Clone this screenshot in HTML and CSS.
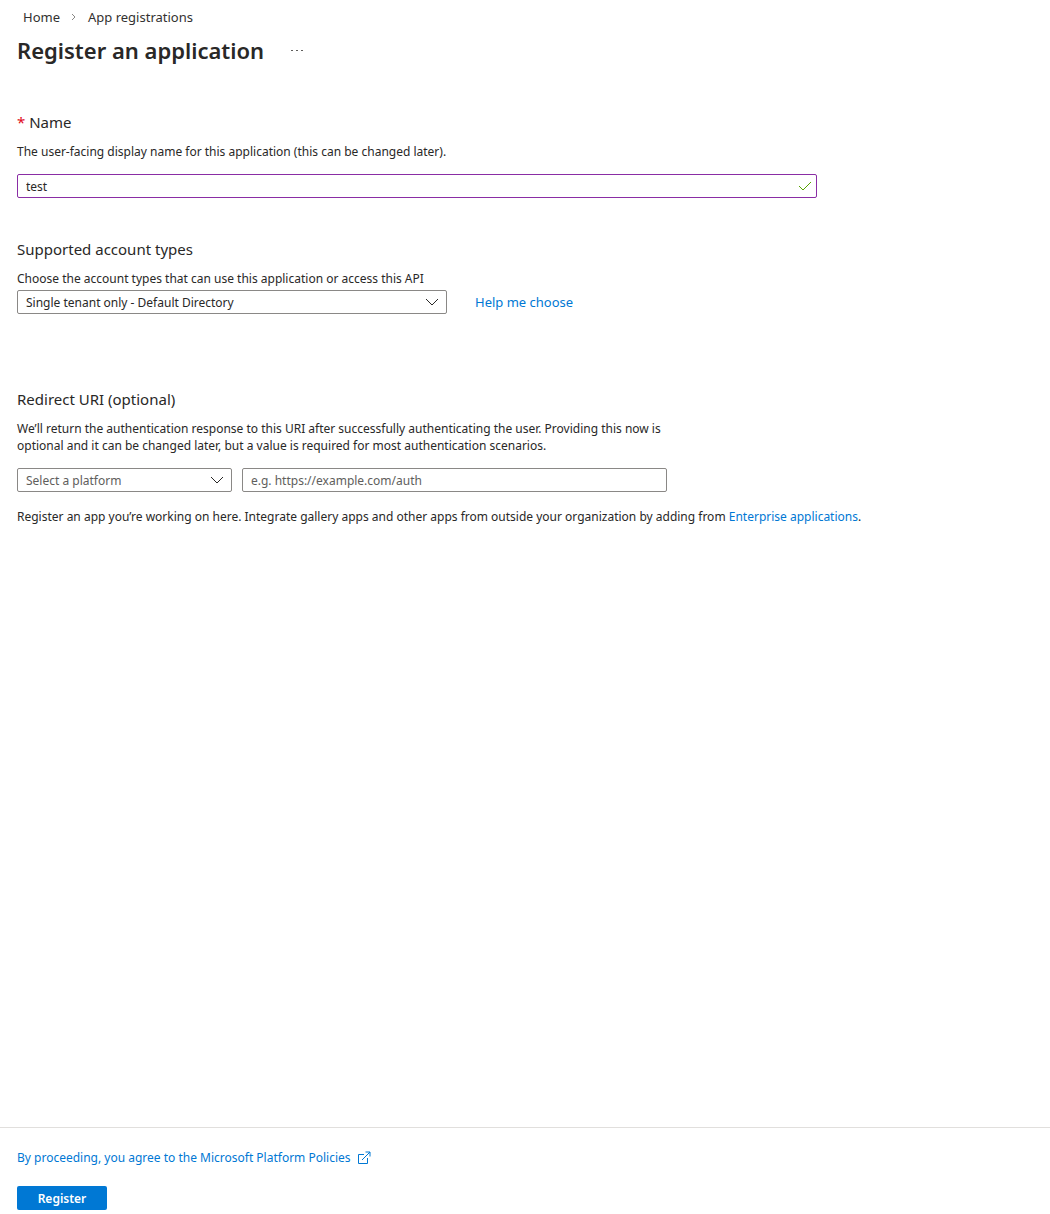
FILE: index.html
```html
<!DOCTYPE html>
<html lang="en">
<head>
    <meta charset="UTF-8">
    <meta name="viewport" content="width=device-width, initial-scale=1.0">
    <title>Register an application</title>
    <link rel="stylesheet" href="styles.css">
</head>
<body>
    <header class="page-header">
        <nav class="breadcrumb" aria-label="Breadcrumb">
            <a href="#">Home</a>
            <svg class="crumb-arrow" viewBox="0 0 6 8" aria-hidden="true"><path d="M1 1l3 3-3 3"/></svg>
            <a href="#">App registrations</a>
        </nav>
        <div class="title-row">
            <h1>Register an application</h1>
            <button class="more-button" type="button" aria-label="More">
                <svg viewBox="0 0 12 2" aria-hidden="true"><path d="M0 0h2v1H0zM5 0h2v1H5zM10 0h2v1h-2z"/></svg>
            </button>
        </div>
    </header>

    <form class="register-form">
        <main class="content">
            <!-- Name -->
            <section class="section name-section">
                <h2><span class="required">*</span> <label for="name">Name</label></h2>
                <p>The user-facing display name for this application (this can be changed later).</p>
                <div class="field name-field">
                    <input type="text" id="name" value="test">
                    <svg class="check" viewBox="0 0 14 10" aria-hidden="true"><path d="M1 5l4 4 8-8"/></svg>
                </div>
            </section>

            <!-- Account types -->
            <section class="section account-section">
                <h2>Supported account types</h2>
                <p><label for="accounts">Choose the account types that can use this application or access this API</label></p>
                <div class="account-row">
                    <div class="field account-field">
                        <select id="accounts">
                            <option>Single tenant only - Default Directory</option>
                        </select>
                        <svg class="chevron" viewBox="0 0 14 8" aria-hidden="true"><path d="M1 1l6 6 6-6"/></svg>
                    </div>
                    <a class="help-link" href="#">Help me choose</a>
                </div>
            </section>

            <!-- Redirect URI -->
            <section class="section redirect-section">
                <h2>Redirect URI (optional)</h2>
                <p class="redirect-text">We’ll return the authentication response to this URI after successfully authenticating the user. Providing this now is optional and it can be changed later, but a value is required for most authentication scenarios.</p>
                <div class="redirect-row">
                    <div class="field platform-field">
                        <select class="empty" aria-label="Platform">
                            <option>Select a platform</option>
                        </select>
                        <svg class="chevron" viewBox="0 0 14 8" aria-hidden="true"><path d="M1 1l6 6 6-6"/></svg>
                    </div>
                    <div class="field uri-field">
                        <input type="text" aria-label="Redirect URI" placeholder="e.g. https://example.com/auth">
                    </div>
                </div>
                <p>Register an app you’re working on here. Integrate gallery apps and other apps from outside your organization by adding from <a href="#">Enterprise applications</a>.</p>
            </section>
        </main>

        <footer class="page-footer">
            <a class="policy-link" href="#">By proceeding, you agree to the Microsoft Platform Policies
                <svg viewBox="0 0 14 14" aria-hidden="true"><path d="M7 3.500H1.500v9h9V7M5 9l8-8M8.500 1H13v4.500"/></svg>
            </a>
            <button class="register-button" type="submit">Register</button>
        </footer>
    </form>
</body>
</html>
```

FILE: styles.css
```css
* {
    margin: 0;
    padding: 0;
    box-sizing: border-box;
}

body {
    min-height: 100vh;
    display: flex;
    flex-direction: column;
    background-color: #fff;
    color: #292827;
    font-family: 'Noto Sans', sans-serif;
    font-size: 12px;
    line-height: 17px;
}

a {
    color: #0078d4;
    text-decoration: none;
}

svg {
    fill: none;
    stroke: currentColor;
}

input, select, button {
    font: inherit;
    color: inherit;
}

/* Header */
.page-header {
    padding: 8px 17px 0;
}

.breadcrumb {
    display: flex;
    align-items: center;
    gap: 11px;
    padding-left: 6px;
    font-size: 13px;
    line-height: 18px;
}

.breadcrumb a {
    color: #323130;
}

.crumb-arrow {
    width: 6px;
    height: 8px;
    color: #8a8886;
}

.title-row {
    display: flex;
    align-items: center;
    gap: 27px;
    padding-top: 8px;
}

h1 {
    font-size: 22px;
    font-weight: 600;
    line-height: 32px;
}

.more-button {
    border: none;
    background: none;
    line-height: 0;
}

.more-button svg {
    width: 12px;
    height: 2px;
    fill: #605e5c;
    stroke: none;
}

/* Form */
.register-form {
    flex: 1;
    display: flex;
    flex-direction: column;
}

.content {
    flex: 1;
    padding: 46px 17px 0;
}

h2 {
    font-size: 15px;
    font-weight: 400;
    line-height: 20px;
    margin-bottom: 11px;
}

.required {
    color: #e00b1c;
}

.name-section {
    margin-bottom: 41px;
}

.account-section {
    margin-bottom: 75px;
}

.field {
    position: relative;
}

.field input, .field select {
    display: block;
    width: 100%;
    height: 24px;
    padding: 0 8px;
    border: 1px solid #8a8886;
    border-radius: 2px;
    background-color: #fff;
    appearance: none;
    outline: none;
}

.field .empty, .field input::placeholder {
    color: #605e5c;
}

.name-field {
    max-width: 800px;
    margin-top: 14px;
}

.field.name-field input {
    border-color: #8a2da5;
}

.check {
    position: absolute;
    top: 7px;
    right: 5px;
    width: 14px;
    height: 10px;
    color: #57a300;
}

.chevron {
    position: absolute;
    top: 8px;
    right: 8px;
    width: 14px;
    height: 8px;
    pointer-events: none;
}

.account-row {
    display: flex;
    align-items: center;
    gap: 28px;
    margin-top: 3px;
}

.account-field {
    width: 430px;
}

.help-link {
    font-size: 13px;
}

.redirect-text {
    max-width: 670px;
}

.redirect-row {
    display: flex;
    gap: 10px;
    margin: 14px 0 16px;
}

.platform-field {
    width: 215px;
}

.uri-field {
    width: 425px;
}

/* Footer */
.page-footer {
    display: flex;
    flex-direction: column;
    align-items: flex-start;
    gap: 20px;
    padding: 21px 17px 4px;
    border-top: 1px solid #e1dfdd;
}

.policy-link {
    display: flex;
    align-items: center;
    gap: 6px;
}

.policy-link svg {
    width: 14px;
    height: 14px;
}

.register-button {
    width: 90px;
    height: 24px;
    border: none;
    border-radius: 2px;
    background-color: #0078d4;
    color: #fff;
    font-weight: 600;
}
```
